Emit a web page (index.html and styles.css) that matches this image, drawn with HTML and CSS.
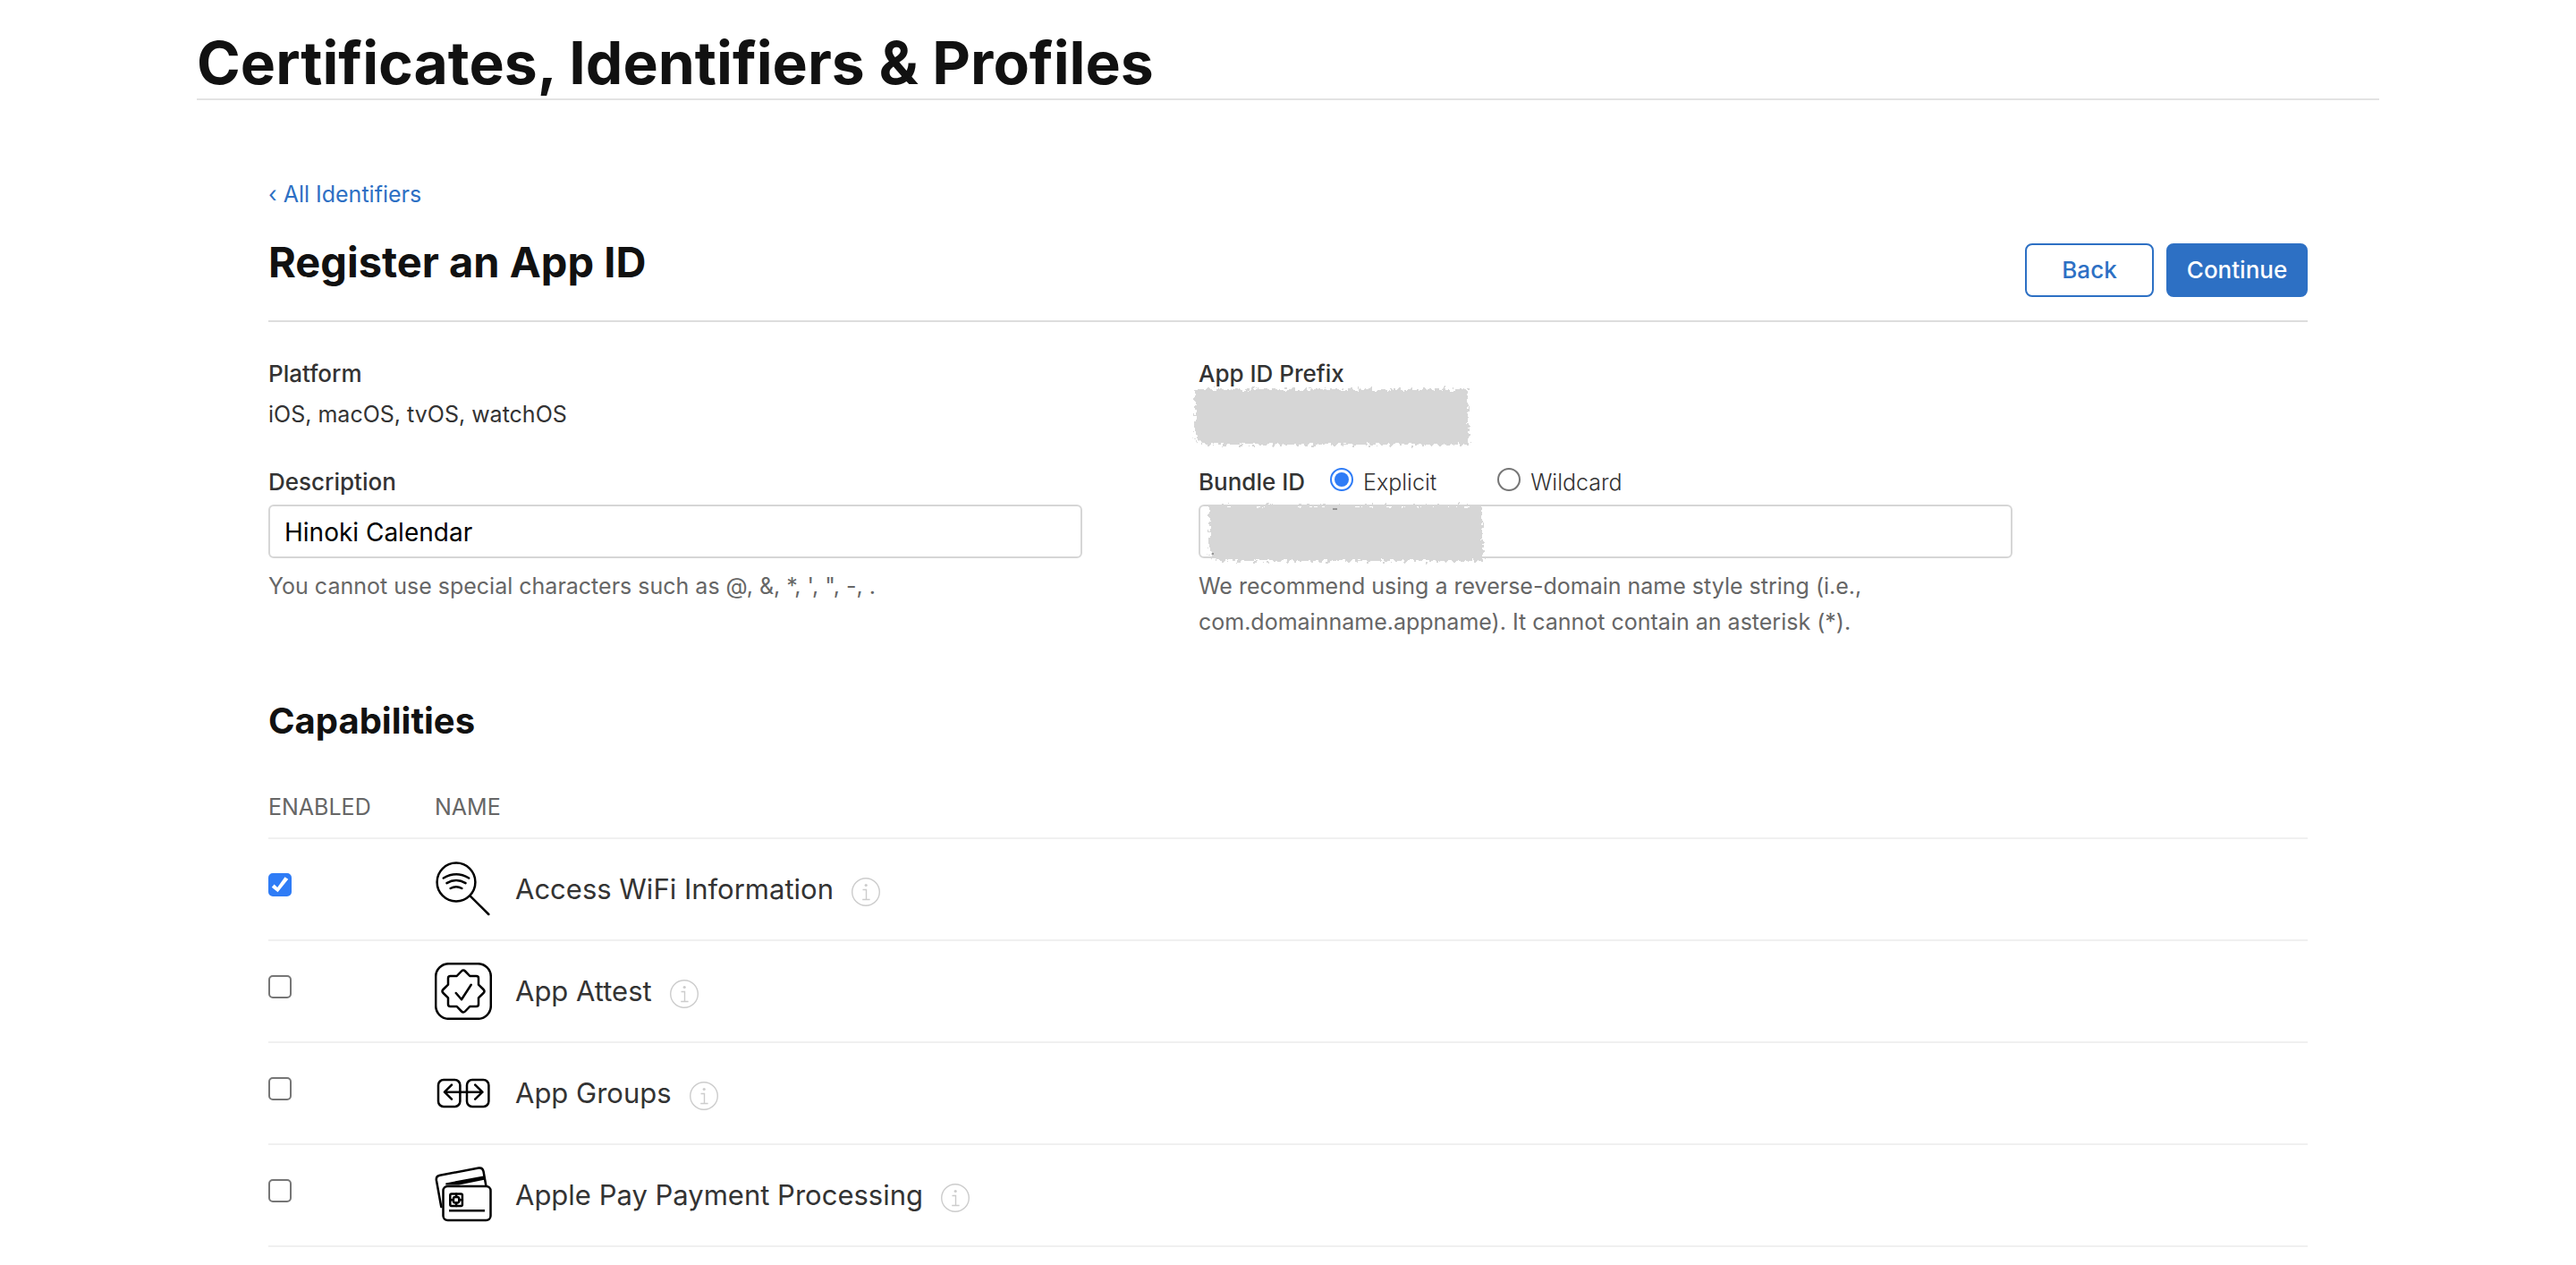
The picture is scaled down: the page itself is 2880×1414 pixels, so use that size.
FILE: index.html
```html
<!DOCTYPE html>
<html lang="en">
<head>
<meta charset="utf-8">
<title>Register an App ID</title>
<link rel="stylesheet" href="styles.css">
</head>
<body>
<div class="shell">
  <header class="site-header">
    <h1 class="site-title">Certificates, Identifiers &amp; Profiles</h1>
  </header>
  <main class="content">
    <a class="back-link" href="#">‹ All Identifiers</a>
    <div class="page-header">
      <h2 class="page-title">Register an App ID</h2>
      <div class="actions">
        <button class="button button-back" type="button">Back</button>
        <button class="button button-primary" type="submit" form="app-id-form">Continue</button>
      </div>
    </div>

    <form id="app-id-form">
      <div class="fields">
        <div class="field">
          <div class="field-label">Platform</div>
          <div class="field-value">iOS, macOS, tvOS, watchOS</div>
        </div>
        <div class="field">
          <div class="field-label">App ID Prefix</div>
          <div class="field-value prefix-value">
            <svg class="mask mask-prefix" viewBox="0 0 316 72" aria-hidden="true">
              <defs>
                <filter id="rough" x="0" y="0" width="316" height="72" filterUnits="userSpaceOnUse">
                  <feTurbulence type="fractalNoise" baseFrequency="0.22" numOctaves="2" seed="4" result="n"/>
                  <feDisplacementMap in="SourceGraphic" in2="n" scale="11" xChannelSelector="R" yChannelSelector="G"/>
                </filter>
              </defs>
              <path d="M5 5H311V67H13L5 58Z" fill="#d6d6d6" filter="url(#rough)"/>
            </svg>
          </div>
        </div>
        <div class="field">
          <label class="field-label" for="description">Description</label>
          <input class="text-input" id="description" type="text" value="Hinoki Calendar">
          <p class="hint">You cannot use special characters such as @, &amp;, *, ', ", -, .</p>
        </div>
        <div class="field">
          <div class="bundle-row">
            <label class="field-label" for="bundle">Bundle ID</label>
            <span class="choice"><input class="radio" type="radio" name="kind" id="explicit" checked><label for="explicit">Explicit</label></span>
            <span class="choice"><input class="radio" type="radio" name="kind" id="wildcard"><label for="wildcard">Wildcard</label></span>
          </div>
          <div class="input-wrap">
            <input class="text-input" id="bundle" type="text">
            <svg class="mask mask-bundle" viewBox="0 0 316 72" aria-hidden="true">
              <path d="M5 5H311V67H13L5 58Z" fill="#d6d6d6" filter="url(#rough)"/>
              <path d="M143 9h5M8 59h2" stroke="#555" stroke-width="1"/>
            </svg>
          </div>
          <p class="hint">We recommend using a reverse-domain name style string (i.e., com.domainname.appname). It cannot contain an asterisk (*).</p>
        </div>
      </div>

      <h3 class="section-title">Capabilities</h3>
      <table class="capabilities">
        <thead>
          <tr><th class="col-enabled" scope="col">ENABLED</th><th scope="col">NAME</th></tr>
        </thead>
        <tbody>
          <tr>
            <td><input class="checkbox" type="checkbox" id="cap-wifi" checked></td>
            <td>
              <div class="capability">
                <svg class="cap-icon" viewBox="0 0 64 64" aria-hidden="true">
                  <circle cx="24" cy="24" r="21.4"/>
                  <path d="M39.5 39.3 60.3 60M9.8 19.5Q24 11.2 38.2 19.5M13.5 25.2Q24 19 34.5 25.2M17.6 31Q24 27.4 30.4 31"/>
                </svg>
                <label for="cap-wifi">Access WiFi Information</label>
                <button class="info" type="button" aria-label="About Access WiFi Information"><svg viewBox="0 0 32 32"><circle cx="16" cy="16" r="15.3"/><path d="M12.5 13.5H16.5V24.5M12.2 24.5H20.6"/><circle class="dot" cx="16.2" cy="8.5" r="1.6"/></svg></button>
              </div>
            </td>
          </tr>
          <tr>
            <td><input class="checkbox" type="checkbox" id="cap-attest"></td>
            <td>
              <div class="capability">
                <svg class="cap-icon" viewBox="0 0 64 64" aria-hidden="true">
                  <rect x="1.2" y="1.2" width="61.6" height="61.6" rx="14.5"/>
                  <path d="M24.7 15 30 9.5Q32 7.5 34 9.5L39.3 15H46.5Q49 15 49 17.5V24.7L54.5 30Q56.5 32 54.5 34L49 39.3V46.5Q49 49 46.5 49H39.3L34 54.5Q32 56.5 30 54.5L24.7 49H17.5Q15 49 15 46.5V39.3L9.5 34Q7.5 32 9.5 30L15 24.7V17.5Q15 15 17.5 15ZM23.8 34 30 41.3 40.7 24.8"/>
                </svg>
                <label for="cap-attest">App Attest</label>
                <button class="info" type="button" aria-label="About App Attest"><svg viewBox="0 0 32 32"><circle cx="16" cy="16" r="15.3"/><path d="M12.5 13.5H16.5V24.5M12.2 24.5H20.6"/><circle class="dot" cx="16.2" cy="8.5" r="1.6"/></svg></button>
              </div>
            </td>
          </tr>
          <tr>
            <td><input class="checkbox" type="checkbox" id="cap-groups"></td>
            <td>
              <div class="capability">
                <svg class="cap-icon" viewBox="0 0 64 64" aria-hidden="true">
                  <rect x="4" y="17" width="24.4" height="30" rx="6"/>
                  <rect x="36" y="17" width="24.4" height="30" rx="6"/>
                  <path d="M11 30.7H53.4M19 22.6 11 30.7 19 38.6M45.2 22.6 53.4 30.7 45.2 38.6"/>
                </svg>
                <label for="cap-groups">App Groups</label>
                <button class="info" type="button" aria-label="About App Groups"><svg viewBox="0 0 32 32"><circle cx="16" cy="16" r="15.3"/><path d="M12.5 13.5H16.5V24.5M12.2 24.5H20.6"/><circle class="dot" cx="16.2" cy="8.5" r="1.6"/></svg></button>
              </div>
            </td>
          </tr>
          <tr>
            <td><input class="checkbox" type="checkbox" id="cap-pay"></td>
            <td>
              <div class="capability">
                <svg class="cap-icon" viewBox="0 0 64 64" aria-hidden="true">
                  <path d="M7.3 45 1.9 15.2Q1.2 10.6 5.8 9.7L49.3 1.6Q53.6 .9 54.5 5.2L57.3 21"/>
                  <path d="M12.3 18.4 55.8 10.2 56.6 14.4 27 20.6H12.3Z" fill="#000" stroke="none"/>
                  <rect x="9.5" y="22" width="53" height="38" rx="5"/>
                  <rect x="17.3" y="30.4" width="13.6" height="13.6" rx="1.5"/>
                  <rect x="20.9" y="34" width="6.4" height="6.4" rx="2.2"/>
                  <path d="M24.1 30.4V34M24.1 40.4V44M17.3 37.2H20.9M27.3 37.2H30.9"/>
                  <path d="M16 49.2H56" stroke-linecap="butt"/>
                </svg>
                <label for="cap-pay">Apple Pay Payment Processing</label>
                <button class="info" type="button" aria-label="About Apple Pay Payment Processing"><svg viewBox="0 0 32 32"><circle cx="16" cy="16" r="15.3"/><path d="M12.5 13.5H16.5V24.5M12.2 24.5H20.6"/><circle class="dot" cx="16.2" cy="8.5" r="1.6"/></svg></button>
              </div>
            </td>
          </tr>
        </tbody>
      </table>
    </form>
  </main>
</div>
</body>
</html>
```

FILE: styles.css
```css
* { box-sizing: border-box; }

body {
  margin: 0;
  background: #fff;
  color: #333;
  font: 400 25px/40px Inter, "Liberation Sans", sans-serif;
}

h1, h2, h3, p { margin: 0; }

.shell {
  max-width: 2440px;
  margin: 0 auto;
}

.site-header {
  padding-top: 30px;
  border-bottom: 2px solid #e3e3e3;
}

.site-title {
  color: #111;
  font-size: 66px;
  font-weight: 700;
  line-height: 80px;
}

.content { padding: 85px 80px 20px; }

.back-link {
  display: block;
  width: fit-content;
  color: #2d70c4;
  text-decoration: none;
}

.page-header {
  display: flex;
  justify-content: space-between;
  margin-top: 27px;
  padding-bottom: 26px;
  border-bottom: 2px solid #ddd;
}

.page-title {
  color: #111;
  font-size: 47px;
  font-weight: 700;
  line-height: 58px;
}

.actions {
  display: flex;
  gap: 14px;
  padding-top: 8px;
}

.button {
  height: 60px;
  padding: 0 16px;
  border: 2px solid #2d70c4;
  border-radius: 8px;
  font: 500 26px/40px Inter, "Liberation Sans", sans-serif;
}

.button-back {
  min-width: 144px;
  background: #fff;
  color: #2d70c4;
}

.button-primary {
  min-width: 158px;
  background: #2d70c4;
  color: #fff;
}

.fields {
  display: grid;
  grid-template-columns: 1fr 1fr;
  gap: 36px 130px;
  max-width: 1950px;
  padding-top: 38px;
}

.field-label {
  display: block;
  margin-bottom: 5px;
  font-size: 26px;
  font-weight: 500;
}

.field-value { min-height: 40px; }

.prefix-value,
.input-wrap { position: relative; }

.mask {
  position: absolute;
  width: 316px;
  height: 72px;
}

.mask-prefix { left: -9px; top: -13px; }
.mask-bundle { left: 7px; top: -4px; }

.text-input {
  display: block;
  width: 100%;
  height: 60px;
  padding: 2px 16px 0;
  border: 2px solid #d6d6d6;
  border-radius: 6px;
  background: #fff;
  color: #000;
  font: 400 28px/40px Inter, "Liberation Sans", sans-serif;
}

.hint {
  max-width: 800px;
  margin-top: 11px;
  color: #666;
}

.bundle-row { display: flex; }

.choice {
  display: flex;
  font-weight: 300;
}

.choice:nth-child(2) { margin-left: 28px; }
.choice:nth-child(3) { margin-left: 68px; }

.radio {
  display: grid;
  place-items: center;
  width: 26px;
  height: 26px;
  margin: 4px 11px 0 0;
  border: 2px solid #767676;
  border-radius: 50%;
  background: #fff;
  appearance: none;
}

.radio:checked { border-color: #2f7cf6; }

.radio:checked::before {
  content: "";
  width: 16px;
  height: 16px;
  border-radius: 50%;
  background: #2f7cf6;
}

.section-title {
  margin-top: 67px;
  color: #111;
  font-size: 40px;
  font-weight: 700;
  line-height: 48px;
}

.capabilities {
  width: 100%;
  margin-top: 52px;
  border-collapse: collapse;
}

.capabilities th {
  padding: 0 0 14px;
  border-bottom: 2px solid #f0f0f0;
  color: #666;
  font-weight: 400;
  text-align: left;
}

.col-enabled { width: 186px; }

.capabilities td {
  height: 114px;
  padding: 24px 0;
  border-bottom: 2px solid #f0f0f0;
  vertical-align: top;
}

.checkbox {
  display: block;
  width: 26px;
  height: 26px;
  margin: 14px 0 0;
  border: 2px solid #767676;
  border-radius: 5px;
  background: #fff;
  appearance: none;
}

.checkbox:checked {
  border-color: #2f7cf6;
  background: #2f7cf6;
}

.checkbox:checked::before {
  content: "";
  display: block;
  width: 22px;
  height: 22px;
  background: #fff;
  clip-path: polygon(8% 62%, 21% 48%, 37% 64%, 75% 10%, 92% 22%, 39% 88%);
}

.capability {
  display: flex;
  align-items: center;
  height: 64px;
  font-size: 31px;
}

.cap-icon {
  width: 64px;
  height: 64px;
  margin-right: 26px;
  fill: none;
  stroke: #000;
  stroke-width: 2.5;
  stroke-linecap: round;
  stroke-linejoin: round;
}

.info {
  width: 32px;
  height: 32px;
  margin: 6px 0 0 20px;
  padding: 0;
  border: 0;
  background: none;
}

.info svg {
  display: block;
  fill: none;
  stroke: #ccc;
  stroke-width: 1.4;
}

.info .dot {
  fill: #ccc;
  stroke: none;
}
```
